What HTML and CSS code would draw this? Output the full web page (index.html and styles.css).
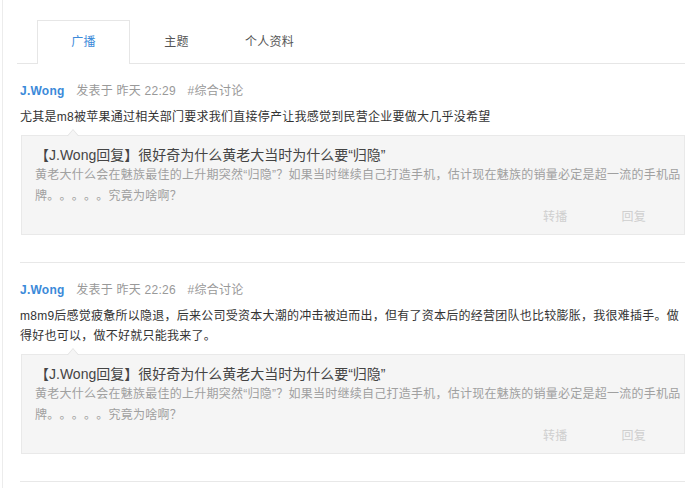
FILE: index.html
```html
<!DOCTYPE html>
<html lang="zh-CN">
<head>
    <meta charset="UTF-8">
    <meta name="viewport" content="width=device-width, initial-scale=1.0">
    <title>个人主页 - 广播</title>
    <link rel="stylesheet" href="styles.css">
</head>
<body>
    <div class="page">
        <ul class="tabs">
            <li class="tab active">广播</li>
            <li class="tab">主题</li>
            <li class="tab">个人资料</li>
        </ul>

        <div class="post">
            <div class="meta">
                <a class="user" href="#">J.Wong</a>
                <span class="time">发表于 昨天 22:29</span>
                <a class="topic" href="#">#综合讨论</a>
            </div>
            <p class="text">尤其是m8被苹果通过相关部门要求我们直接停产让我感觉到民营企业要做大几乎没希望</p>
            <div class="quote">
                <div class="quote-title">【J.Wong回复】很好奇为什么黄老大当时为什么要“归隐”</div>
                <p class="quote-text">黄老大什么会在魅族最佳的上升期突然“归隐”？如果当时继续自己打造手机，估计现在魅族的销量必定是超一流的手机品牌。。。。。究竟为啥啊？</p>
                <div class="actions">
                    <a href="#">转播</a>
                    <a href="#">回复</a>
                </div>
            </div>
        </div>

        <div class="post">
            <div class="meta">
                <a class="user" href="#">J.Wong</a>
                <span class="time">发表于 昨天 22:26</span>
                <a class="topic" href="#">#综合讨论</a>
            </div>
            <p class="text">m8m9后感觉疲惫所以隐退，后来公司受资本大潮的冲击被迫而出，但有了资本后的经营团队也比较膨胀，我很难插手。做得好也可以，做不好就只能我来了。</p>
            <div class="quote">
                <div class="quote-title">【J.Wong回复】很好奇为什么黄老大当时为什么要“归隐”</div>
                <p class="quote-text">黄老大什么会在魅族最佳的上升期突然“归隐”？如果当时继续自己打造手机，估计现在魅族的销量必定是超一流的手机品牌。。。。。究竟为啥啊？</p>
                <div class="actions">
                    <a href="#">转播</a>
                    <a href="#">回复</a>
                </div>
            </div>
        </div>
    </div>
</body>
</html>
```

FILE: styles.css
```css
body {
    margin: 0;
    font-family: "Liberation Sans", "Noto Sans CJK SC", sans-serif;
    font-size: 12px;
    letter-spacing: 0.25px;
    text-spacing-trim: space-all;
    color: #333;
    background-color: #fff;
}
a {
    text-decoration: none;
}
.page {
    margin-left: 2px;
    border-left: 1px solid #ececec;
    padding: 20px 15px 0 17px;
    min-height: 468px;
}
.tabs {
    list-style: none;
    margin: 0 0 0 -3px;
    padding: 0 0 0 20px;
    display: flex;
    border-bottom: 1px solid #e6e6e6;
}
.tab {
    box-sizing: border-box;
    width: 93px;
    height: 44px;
    line-height: 43px;
    margin-bottom: -1px;
    text-align: center;
    color: #555;
    border: 1px solid transparent;
    border-bottom: none;
}
.tab.active {
    color: #3b8ad9;
    background-color: #fff;
    border-color: #e6e6e6;
}
.post {
    padding: 17px 0 27px;
    border-bottom: 1px solid #e8e8e8;
}
.meta {
    line-height: 20px;
    color: #999;
}
.user {
    color: #3b8ad9;
    font-weight: bold;
    margin-right: 8px;
}
.time {
    margin-right: 8px;
}
.topic {
    color: #999;
}
.text {
    margin: 6px 0 0;
    line-height: 20px;
}
.quote {
    position: relative;
    margin: 8px 0 0 1px;
    padding: 9px 0 7px 13px;
    background-color: #f5f5f5;
    border: 1px solid #e9e9e9;
}
.quote::before,
.quote::after {
    content: "";
    position: absolute;
    border-style: solid;
    border-color: transparent;
    border-top: none;
}
.quote::before {
    top: -7px;
    left: 45px;
    border-width: 0 6px 7px;
    border-bottom-color: #e2e2e2;
}
.quote::after {
    top: -6px;
    left: 46px;
    border-width: 0 5px 6px;
    border-bottom-color: #f5f5f5;
}
.quote-title {
    font-size: 14px;
    line-height: 20px;
    letter-spacing: 0;
    color: #444;
}
.quote-text {
    margin: 0;
    line-height: 21px;
    color: #a0a0a0;
}
.actions {
    display: flex;
    justify-content: flex-end;
    gap: 54px;
    padding-right: 38px;
    line-height: 20px;
}
.actions a {
    color: #cfcfcf;
}
```
